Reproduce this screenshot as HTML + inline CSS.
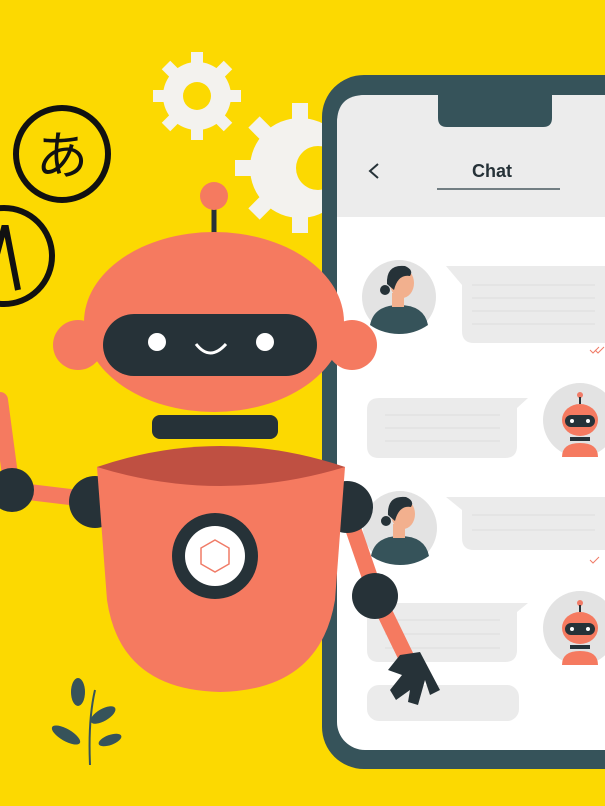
<!DOCTYPE html>
<html><head><meta charset="utf-8"><style>html,body{margin:0;padding:0;width:605px;height:806px;overflow:hidden;background:#FCD901}svg{display:block}</style></head><body>
<svg width="605" height="806" viewBox="0 0 605 806" xmlns="http://www.w3.org/2000/svg">
<rect width="605" height="806" fill="#FCD901"/>
<!-- gears -->
<g fill="#F3F2EE">
<circle cx="197" cy="96" r="34"/>
<g stroke="#F3F2EE" stroke-width="12">
<line x1="197" y1="52" x2="197" y2="140"/><line x1="153" y1="96" x2="241" y2="96"/>
<line x1="166" y1="65" x2="228" y2="127"/><line x1="228" y1="65" x2="166" y2="127"/>
</g>
<circle cx="300" cy="168" r="50"/>
<g stroke="#F3F2EE" stroke-width="16">
<line x1="300" y1="103" x2="300" y2="233"/><line x1="235" y1="168" x2="365" y2="168"/>
<line x1="254" y1="122" x2="346" y2="214"/><line x1="346" y1="122" x2="254" y2="214"/>
</g>
</g>
<circle cx="197" cy="96" r="14" fill="#FCD901"/>
<circle cx="318" cy="168" r="22" fill="#FCD901"/>
<!-- language symbols -->
<circle cx="62" cy="154" r="46" fill="none" stroke="#111" stroke-width="6"/>
<text x="62" y="174" font-family="Noto Sans CJK JP, sans-serif" font-size="52" text-anchor="middle" fill="#111">あ</text>
<circle cx="4" cy="256" r="48" fill="none" stroke="#111" stroke-width="6"/>
<path d="M-14 295 L4 228 L6 228 L18 290" fill="none" stroke="#111" stroke-width="6"/>
<!-- phone -->
<rect x="322" y="75" width="330" height="694" rx="42" fill="#36535A"/>
<rect x="337" y="95" width="300" height="655" rx="28" fill="#FFFFFF"/>
<path d="M337 217 V123 Q337 95 365 95 H640 V217 Z" fill="#ECECEC"/>
<path d="M438 93 H552 V118 Q552 127 543 127 H447 Q438 127 438 118 Z" fill="#36535A"/>
<text x="492" y="177" font-family="Liberation Sans, sans-serif" font-weight="bold" font-size="18" text-anchor="middle" fill="#263238">Chat</text>
<path d="M378 164 L370 171 L378 178" fill="none" stroke="#263238" stroke-width="2"/>
<line x1="437" y1="189" x2="560" y2="189" stroke="#4a5a60" stroke-width="1.5"/>
<!-- chat bubbles -->
<g fill="#EBEBEB">
<path d="M446 266 H605 V343 H474 Q462 343 462 331 V285 Z"/>
<path d="M528 398 H379 Q367 398 367 410 V446 Q367 458 379 458 H505 Q517 458 517 446 V408 Z"/>
<path d="M446 497 H605 V550 H474 Q462 550 462 538 V510 Z"/>
<path d="M528 603 H379 Q367 603 367 615 V650 Q367 662 379 662 H505 Q517 662 517 650 V612 Z"/>
<rect x="367" y="685" width="152" height="36" rx="12"/>
</g>
<g stroke="#DCDCDC" stroke-width="1">
<line x1="472" y1="285" x2="595" y2="285"/><line x1="472" y1="298" x2="595" y2="298"/><line x1="472" y1="311" x2="595" y2="311"/><line x1="472" y1="324" x2="595" y2="324"/>
<line x1="385" y1="415" x2="500" y2="415"/><line x1="385" y1="428" x2="500" y2="428"/><line x1="385" y1="441" x2="500" y2="441"/>
<line x1="472" y1="515" x2="595" y2="515"/><line x1="472" y1="530" x2="595" y2="530"/>
<line x1="385" y1="620" x2="500" y2="620"/><line x1="385" y1="634" x2="500" y2="634"/><line x1="385" y1="648" x2="500" y2="648"/>
</g>
<path d="M590 350 l3 3 l6 -6 M595 350 l3 3 l6 -6" stroke="#F07B67" stroke-width="1" fill="none"/>
<path d="M590 560 l3 3 l6 -6" stroke="#F07B67" stroke-width="1" fill="none"/>
<!-- woman avatars -->
<g id="w">
<circle cx="399" cy="297" r="37" fill="#E3E3E3"/>
<path d="M370 325 Q374 305 399 305 Q424 305 428 325 Q415 334 399 334 Q383 334 370 325 Z" fill="#36535A"/>
<rect x="392" y="293" width="12" height="14" fill="#F2B08E"/>
<ellipse cx="402" cy="283" rx="12" ry="15" fill="#F2B08E"/>
<path d="M387 284 Q386 264 405 266 Q414 270 410 276 Q398 274 394 290 Z" fill="#263238"/>
<circle cx="385" cy="290" r="5" fill="#263238"/>
</g>
<use href="#w" transform="translate(1,231)"/>
<!-- robot avatars -->
<g id="r">
<circle cx="580" cy="420" r="37" fill="#E3E3E3"/>
<circle cx="580" cy="395" r="3" fill="#F07B67"/><line x1="580" y1="397" x2="580" y2="404" stroke="#263238" stroke-width="2"/>
<ellipse cx="580" cy="420" rx="18" ry="16" fill="#F57A60"/>
<rect x="565" y="415" width="30" height="12" rx="6" fill="#263238"/>
<circle cx="572" cy="421" r="2" fill="#fff"/><circle cx="588" cy="421" r="2" fill="#fff"/>
<rect x="570" y="437" width="20" height="4" fill="#263238"/>
<path d="M562 457 Q562 443 580 443 Q598 443 598 457 Z" fill="#F57A60"/>
</g>
<use href="#r" transform="translate(0,208)"/>
<!-- robot arms -->
<path d="M95 500 L12 490 L0 400" fill="none" stroke="#F57A60" stroke-width="16" stroke-linecap="round"/>
<circle cx="12" cy="490" r="22" fill="#263238"/>
<path d="M345 505 L376 595 L410 665" fill="none" stroke="#F57A60" stroke-width="16" stroke-linecap="round"/>
<circle cx="375" cy="596" r="23" fill="#263238"/>
<path d="M400 655 L420 652 L440 690 L430 695 L425 680 L418 705 L408 702 L410 690 L396 700 L390 690 L402 675 L388 670 Z" fill="#263238"/>
<circle cx="95" cy="502" r="26" fill="#263238"/>
<circle cx="347" cy="507" r="26" fill="#263238"/>
<!-- body -->
<path d="M97 467 Q220 440 345 467 L335 600 Q320 690 220 692 Q120 690 107 600 Z" fill="#F57A60"/>
<path d="M97 467 Q220 425 345 467 Q220 505 97 467 Z" fill="#BF5042"/>
<circle cx="215" cy="556" r="43" fill="#263238"/>
<circle cx="215" cy="556" r="30" fill="#fff"/>
<path d="M215 540 L229 548 L229 564 L215 572 L201 564 L201 548 Z" fill="none" stroke="#F07B67" stroke-width="1.5"/>
<!-- neck -->
<rect x="152" y="415" width="126" height="24" rx="8" fill="#263238"/>
<!-- head -->
<line x1="214" y1="205" x2="214" y2="240" stroke="#263238" stroke-width="5"/>
<circle cx="214" cy="196" r="14" fill="#F57A60"/>
<circle cx="78" cy="345" r="25" fill="#F57A60"/>
<circle cx="352" cy="345" r="25" fill="#F57A60"/>
<ellipse cx="214" cy="322" rx="130" ry="90" fill="#F57A60"/>
<rect x="103" y="314" width="214" height="62" rx="31" fill="#263238"/>
<circle cx="157" cy="342" r="9" fill="#fff"/>
<circle cx="265" cy="342" r="9" fill="#fff"/>
<path d="M196 344 Q210 362 226 344" fill="none" stroke="#fff" stroke-width="3"/>
<!-- plant -->
<g fill="#36535A">
<path d="M90 765 Q88 720 95 690" fill="none" stroke="#36535A" stroke-width="2"/>
<ellipse cx="78" cy="692" rx="7" ry="14"/>
<ellipse cx="103" cy="715" rx="14" ry="6" transform="rotate(-30 103 715)"/>
<ellipse cx="66" cy="735" rx="16" ry="6" transform="rotate(30 66 735)"/>
<ellipse cx="110" cy="740" rx="12" ry="5" transform="rotate(-20 110 740)"/>
</g>
</svg>
</body></html>
